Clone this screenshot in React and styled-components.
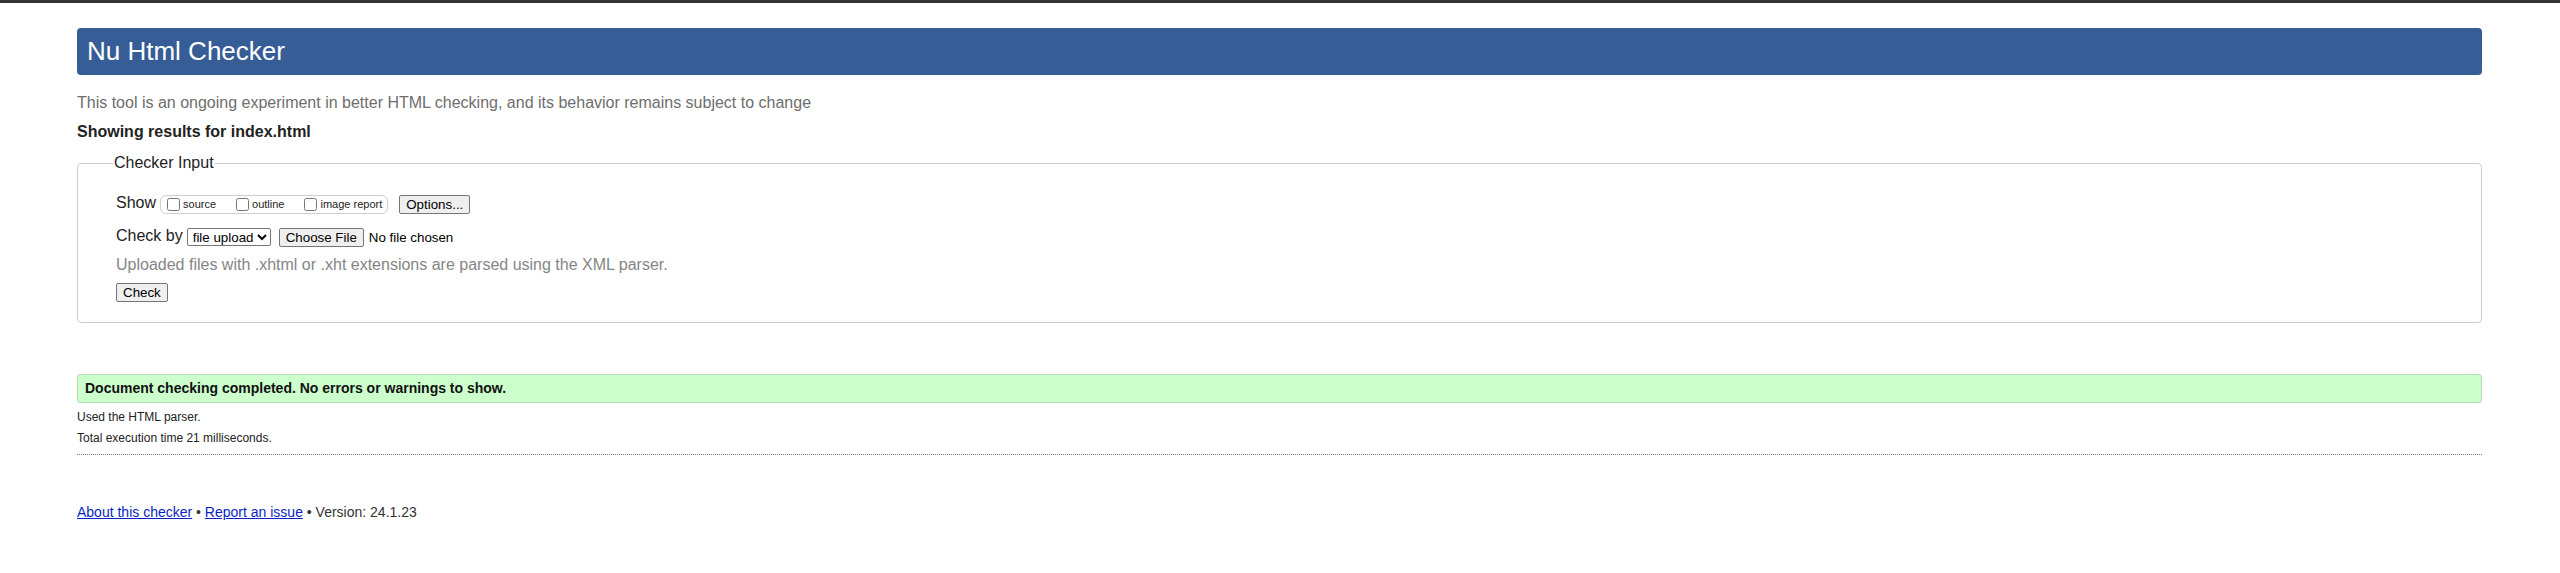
import React from 'react';
import styled, { createGlobalStyle } from 'styled-components';

const GlobalStyle = createGlobalStyle`
  html, body {
    margin: 0;
    padding: 0;
    background: #fff;
  }
  body {
    font-family: "Liberation Sans", Arial, Helvetica, sans-serif;
    color: #222;
  }
`;

const Page = styled.div`
  border-top: 3px solid #333;
  padding: 25px 78px 0 77px;
`;

const Title = styled.h1`
  margin: 0;
  height: 47px;
  padding: 0 10px;
  line-height: 47px;
  font-size: 26px;
  font-weight: normal;
  color: #fff;
  background: #365d95;
  border-radius: 4px;
`;

const Tagline = styled.p`
  margin: 18px 0 0;
  font-size: 16px;
  line-height: 20px;
  color: #6e6e6e;
`;

const ResultsFor = styled.p`
  margin: 9px 0 0;
  font-size: 16px;
  line-height: 20px;
  font-weight: bold;
  color: #222;
`;

const Fieldset = styled.fieldset`
  margin: 12px 0 0;
  padding: 22px 38px 20px;
  border: 1px solid #cbcbcb;
  border-radius: 4px;
  min-width: 0;
`;

const Legend = styled.legend`
  margin-left: -3px;
  padding: 0 1px;
  font-size: 16px;
  line-height: 18px;
  color: #222;
`;

const Row = styled.div`
  display: flex;
  align-items: center;
  height: 20px;
  margin-top: ${(p) => p.$gap || 0}px;
`;

const Label = styled.span`
  font-size: 16px;
  line-height: 16px;
  margin: 0 4px 3px 0;
  color: #222;
`;

const OptionGroup = styled.span`
  display: inline-flex;
  align-items: center;
  height: 19px;
  padding: 0 5px 0 2px;
  margin-right: 11px;
  border: 1px solid #cfcfcf;
  border-radius: 6px;
  box-sizing: border-box;
`;

const OptionItem = styled.label`
  display: inline-flex;
  align-items: center;
  font-size: 11px;
  color: #222;
  margin-right: ${(p) => (p.$last ? 0 : 16)}px;

  input {
    width: 13px;
    height: 13px;
    margin: 0 3px 0 4px;
  }
`;

const Button = styled.button`
  font-family: "Liberation Sans", Arial, sans-serif;
  font-size: 13.333px;
  line-height: normal;
  padding: 1px 6px;
  margin-left: ${(p) => p.$offset || 0}px;
  border: 1px solid #767676;
  border-radius: 2px;
  background: #efefef;
  color: #000;
`;

const Select = styled.select`
  width: 84px;
  height: 18px;
  font-family: "Liberation Sans", Arial, sans-serif;
  font-size: 13.333px;
  color: #000;
  background: #fff;
  border: 1px solid #767676;
  border-radius: 2px;
  padding: 0 0 0 1px;
`;

const FileName = styled.span`
  margin-left: 5px;
  font-size: 13.333px;
  color: #000;
`;

const Hint = styled.p`
  margin: 8px 0 0;
  font-size: 16px;
  line-height: 20px;
  color: #858585;
`;

const CheckRow = styled.div`
  margin-top: 8px;
  display: flex;
`;

const Success = styled.div`
  margin-top: 51px;
  height: 29px;
  padding: 0 7px;
  box-sizing: border-box;
  line-height: 27px;
  font-size: 14px;
  font-weight: bold;
  color: #111;
  background: #ccffcc;
  border: 1px solid #b6d9b6;
  border-radius: 3px;
`;

const Info = styled.p`
  margin: 7px 0 0;
  font-size: 12px;
  line-height: 14px;
  color: #222;
`;

const Divider = styled.hr`
  margin: 9px 0 0;
  border: 0;
  border-top: 1px dotted #777;
  height: 0;
`;

const Footer = styled.p`
  margin: 49px 0 0;
  font-size: 14px;
  line-height: 16px;
  color: #333;

  a {
    color: #0a1fc4;
    text-decoration: underline;
  }
`;

export default function App() {
  const options = ['source', 'outline', 'image report'];

  return (
    <>
      <GlobalStyle />
      <Page>
        <Title>Nu Html Checker</Title>
        <Tagline>
          This tool is an ongoing experiment in better HTML checking, and its behavior remains subject to change
        </Tagline>
        <ResultsFor>Showing results for index.html</ResultsFor>

        <Fieldset>
          <Legend>Checker Input</Legend>
          <Row>
            <Label>Show</Label>
            <OptionGroup>
              {options.map((name, i) => (
                <OptionItem key={name} $last={i === options.length - 1}>
                  <input type="checkbox" />
                  {name}
                </OptionItem>
              ))}
            </OptionGroup>
            <Button type="button">Options...</Button>
          </Row>
          <Row $gap={13}>
            <Label>Check by</Label>
            <Select defaultValue="file">
              <option value="file">file upload</option>
              <option value="address">address</option>
              <option value="text">text input</option>
            </Select>
            <Button type="button" $offset={8}>Choose File</Button>
            <FileName>No file chosen</FileName>
          </Row>
          <Hint>Uploaded files with .xhtml or .xht extensions are parsed using the XML parser.</Hint>
          <CheckRow>
            <Button type="submit">Check</Button>
          </CheckRow>
        </Fieldset>

        <Success>Document checking completed. No errors or warnings to show.</Success>
        <Info>Used the HTML parser.</Info>
        <Info>Total execution time 21 milliseconds.</Info>
        <Divider />

        <Footer>
          <a href="#about">About this checker</a> • <a href="#issue">Report an issue</a> • Version: 24.1.23
        </Footer>
      </Page>
    </>
  );
}
